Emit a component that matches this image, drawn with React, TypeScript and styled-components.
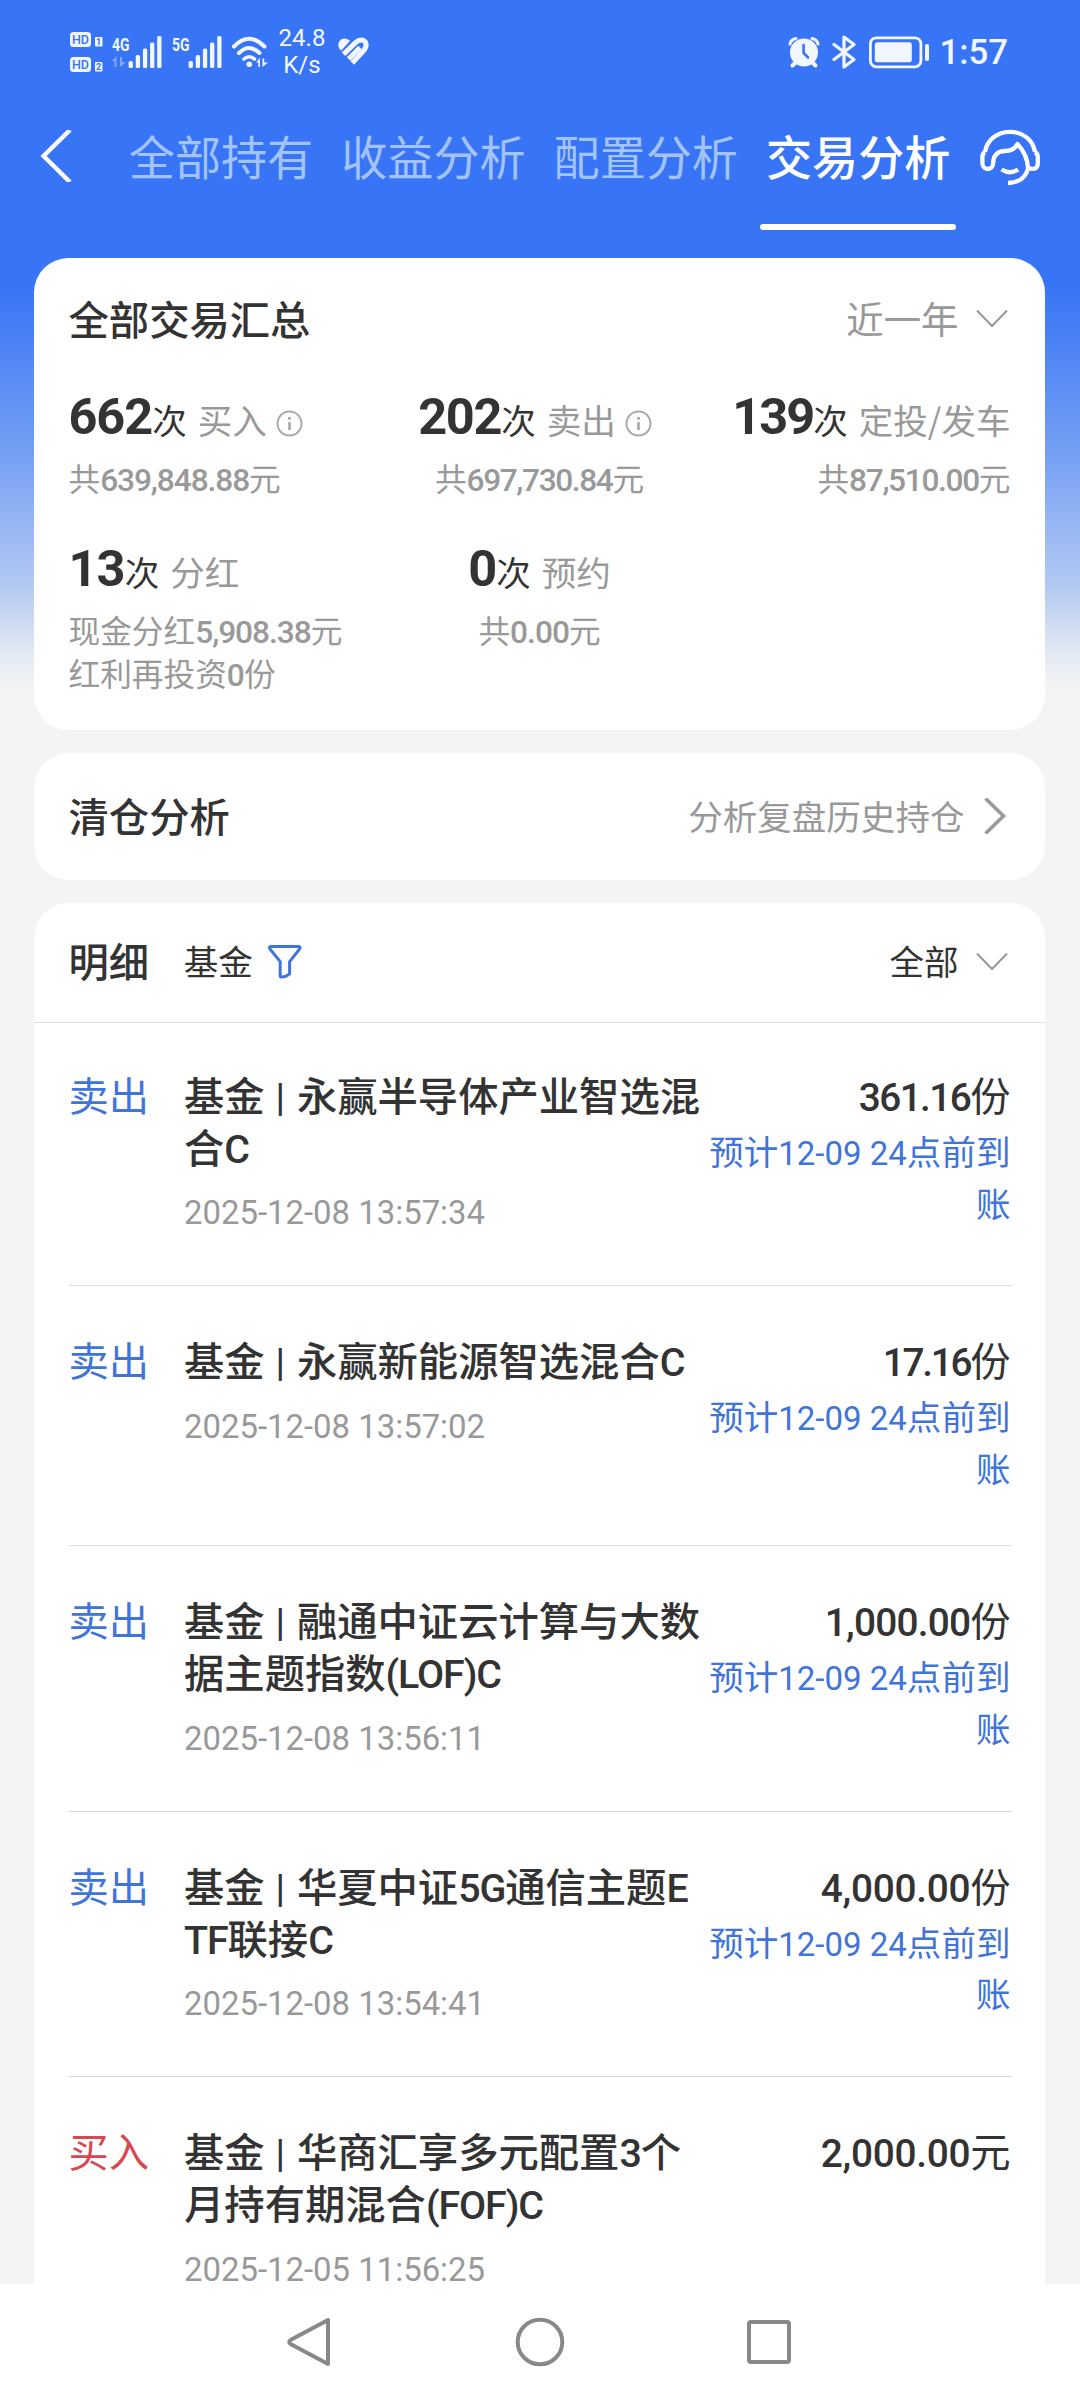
import React from 'react';
import styled, { createGlobalStyle } from 'styled-components';

const CJK = "'Noto Sans CJK SC', 'Noto Sans', sans-serif";
const DIGIT = "Roboto, 'Noto Sans CJK SC', sans-serif";
const BLUE = '#3875f6';
const LINK = '#3f74da';
const INK = '#333333';
const MUTED = '#999999';

const GlobalStyle = createGlobalStyle`
  * { box-sizing: border-box; }
  body { margin: 0; background: #f4f4f4; }
`;

const Screen = styled.div`
  width: 1080px;
  height: 2400px;
  overflow: hidden;
  display: flex;
  flex-direction: column;
  font-family: ${CJK};
  color: ${INK};
  background: linear-gradient(
      ${BLUE} 0,
      ${BLUE} 285px,
      #4c83f5 345px,
      #7ba3f4 465px,
      #b3c9f3 585px,
      #e4eaf3 655px,
      #f4f4f4 690px
    )
    #f4f4f4;
`;

const StatusBar = styled.div`
  height: 104px;
  padding: 0 72px 0 70px;
  display: flex;
  justify-content: space-between;
  align-items: center;
  color: #f2f6ff;
  font-family: ${DIGIT};
`;

const StatusGroup = styled.div`
  display: flex;
  align-items: center;
`;

const StatusIcon = styled.svg<{ $gap?: number }>`
  display: block;
  flex: none;
  overflow: visible;
  margin-left: ${(p) => p.$gap ?? 0}px;
`;

const NetSpeed = styled.div`
  width: 50px;
  margin: 0 8px 0 8px;
  font-size: 24px;
  line-height: 27px;
  text-align: center;
`;

const Clock = styled.div`
  margin-left: 9px;
  font-size: 34.8px;
  line-height: 40px;
  font-weight: 500;
`;

const TopBar = styled.div`
  height: 126px;
  display: flex;
  align-items: flex-start;
  padding-left: 40px;
`;

const BackIcon = styled.svg`
  display: block;
  margin: 26px 51px 0 0;
`;

const Tabs = styled.div`
  display: flex;
  align-items: stretch;
  height: 126px;
  gap: 16.4px;
`;

const Tab = styled.div<{ $active?: boolean }>`
  width: 196px;
  padding-top: 21px;
  display: flex;
  flex-direction: column;
  justify-content: space-between;
  text-align: center;
  white-space: nowrap;
  font-size: 46.08px;
  line-height: 60px;
  font-weight: ${(p) => (p.$active ? 500 : 400)};
  color: ${(p) => (p.$active ? '#fff' : '#a3c3fd')};
  &::after {
    content: '';
    height: 6px;
    border-radius: 3px;
    background: ${(p) => (p.$active ? '#fff' : 'transparent')};
  }
`;

const ServiceIcon = styled.svg`
  display: block;
  margin: 21px 0 0 21px;
`;

const Content = styled.main`
  flex: 1;
  min-height: 0;
  overflow: hidden;
  padding: 28px 35px 0 34px;
  display: flex;
  flex-direction: column;
  gap: 23px;
`;

const Card = styled.section`
  flex: none;
  background: #fff;
  border-radius: 34.56px;
`;

const SummaryCard = styled(Card)`
  height: 472px;
  padding: 29.5px 34.5px 0;
`;

const BetweenRow = styled.div`
  display: flex;
  justify-content: space-between;
  align-items: center;
`;

const Title = styled.h2`
  margin: 0;
  font-size: 40.32px;
  line-height: 60px;
  font-weight: 500;
`;

const Picker = styled.div<{ $size: number; $color: string }>`
  display: flex;
  align-items: center;
  font-size: ${(p) => p.$size}px;
  line-height: 60px;
  color: ${(p) => p.$color};
`;

const PickerIcon = styled.svg<{ $gap: number; $right: number }>`
  display: block;
  margin: 3px ${(p) => p.$right}px 0 ${(p) => p.$gap}px;
`;

const StatGrid = styled.div`
  display: grid;
  grid-template-columns: repeat(3, 1fr);
  row-gap: 42.3px;
  padding-top: 41.5px;
`;

const Stat = styled.div<{ $align: 'flex-start' | 'center' | 'flex-end' }>`
  display: flex;
  flex-direction: column;
  align-items: ${(p) => p.$align};
  white-space: nowrap;
`;

const StatHead = styled.div`
  display: flex;
  align-items: baseline;
  height: 60px;
  font-size: 34.56px;
  line-height: 60px;
  margin-bottom: 6.7px;
`;

const StatCount = styled.span<{ $track: number }>`
  font-family: ${DIGIT};
  font-weight: 700;
  font-size: 50.5px;
  line-height: 0;
  letter-spacing: ${(p) => p.$track}px;
`;

const StatName = styled.span`
  margin-left: 11px;
  color: ${MUTED};
`;

const InfoIcon = styled.svg`
  align-self: center;
  margin: 8px 9px 0 9px;
`;

const StatSub = styled.div`
  font-size: 31.68px;
  line-height: 43px;
  color: ${MUTED};
`;

const Digits = styled.span<{ $size: number; $track?: number; $weight?: number }>`
  font-family: ${DIGIT};
  font-size: ${(p) => p.$size}px;
  letter-spacing: ${(p) => p.$track ?? 0}px;
  font-weight: ${(p) => p.$weight ?? 400};
  line-height: 0;
  white-space: pre;
`;

const ReviewCard = styled(Card)`
  height: 127px;
  padding: 0 34.5px 4px;
  display: flex;
  align-items: center;
  justify-content: space-between;
`;

const DetailCard = styled(Card)`
  border-radius: 34.56px 34.56px 0 0;
  height: 1500px;
`;

const DetailHead = styled.div`
  height: 120px;
  padding: 0 34.5px 5px;
  border-bottom: 1px solid #dcdcdc;
  display: flex;
  align-items: center;
  justify-content: space-between;
`;

const FilterGroup = styled.div`
  display: flex;
  align-items: center;
`;

const FilterName = styled.span`
  margin: 0 14px 0 34.5px;
  font-size: 34.56px;
  line-height: 60px;
`;

const FilterIcon = styled.svg`
  display: block;
  margin-top: 3px;
`;

const TradeRow = styled.article<{ $first?: boolean }>`
  margin: 0 33.5px 0 34.5px;
  padding: ${(p) => (p.$first ? 45 : 47)}px 1px ${(p) => (p.$first ? 51.5 : 52)}px 0;
  border-bottom: 1px solid #dcdcdc;
  display: grid;
  grid-template-columns: 115.5px 519px 1fr;
`;

const Kind = styled.div<{ $buy?: boolean }>`
  font-size: 40.32px;
  line-height: 51.84px;
  color: ${(p) => (p.$buy ? '#d9484f' : LINK)};
`;

const TradeName = styled.div`
  font-size: 40.32px;
  line-height: 51.84px;
  font-weight: 500;
  white-space: nowrap;
`;

const TradeTime = styled.div`
  margin-top: 15.8px;
  height: 46px;
  font-family: ${DIGIT};
  font-size: 32.9px;
  line-height: 51.5px;
  color: ${MUTED};
`;

const Side = styled.div`
  text-align: right;
  white-space: nowrap;
`;

const Amount = styled.div`
  font-size: 40.32px;
  line-height: 51.84px;
  margin-bottom: 5.4px;
`;

const Arrival = styled.div`
  font-size: 34.56px;
  line-height: 51.5px;
  color: ${LINK};
`;

const NavBar = styled.nav`
  flex: none;
  height: 116px;
  background: #fff;
  display: flex;
  align-items: center;
  justify-content: center;
  gap: 179px;
`;

const NavIcon = styled.svg`
  display: block;
`;

function HdBadges() {
  return (
    <StatusIcon width="34" height="42" viewBox="0 0 34 42">
      {[1, 26].map((y, i) => (
        <g key={y}>
          <rect x="0" y={y} width="21" height="15" rx="3.5" fill="#f2f6ff" />
          <text x="10.5" y={y + 12.2} fontSize="13.5" fontWeight="500" fontFamily="Roboto, sans-serif" fill={BLUE} textAnchor="middle" textLength="17" lengthAdjust="spacingAndGlyphs">HD</text>
          <rect x="25" y={y + 5} width="7.5" height="9.5" rx="1" fill="#f2f6ff" />
          <text x="28.7" y={y + 12.9} fontSize="9" fontWeight="700" fontFamily="Roboto, sans-serif" fill={BLUE} textAnchor="middle">{i + 1}</text>
        </g>
      ))}
    </StatusIcon>
  );
}

function Signal({ label, traffic, gap }: { label: string; traffic?: boolean; gap: number }) {
  return (
    <StatusIcon $gap={gap} width="50" height="34" viewBox="0 0 50 34" fill="#f2f6ff">
      <text x="0" y="15.5" fontSize="19" fontWeight="700" fontFamily="Roboto, sans-serif" textLength="17.5" lengthAdjust="spacingAndGlyphs">{label}</text>
      {traffic && <path d="M0 26 L4.5 21 V32 H2.5 V26Z M8 22 H10 V27 H14 L8 32Z" opacity="0.4" />}
      {[7, 13, 19.5, 25.5, 32].map((h, i) => (
        <rect key={h} x={16.6 + i * 7.15} y={33 - h} width="4.3" height={h} rx="1.6" />
      ))}
    </StatusIcon>
  );
}

function Chevron() {
  return (
    <PickerIcon $gap={17} $right={3} width="32" height="20" viewBox="0 0 32 20" fill="none">
      <path d="M1 1.5 L16 17 L31 1.5" stroke="#999" strokeWidth="2" />
    </PickerIcon>
  );
}

function Info() {
  return (
    <InfoIcon width="27" height="27" viewBox="0 0 27 27" fill="none" stroke="#aaa">
      <circle cx="13.5" cy="13.5" r="12" strokeWidth="2" />
      <path d="M13.5 12 V20" strokeWidth="2.6" />
      <path d="M13.5 7 V9.6" strokeWidth="2.8" />
    </InfoIcon>
  );
}

type StatData = {
  count: string;
  track: number;
  name: string;
  info?: boolean;
  align: 'flex-start' | 'center' | 'flex-end';
  subs: [string, string, string, number][];
};

const stats: StatData[] = [
  { count: '662', track: -1.1, name: '买入', info: true, align: 'flex-start', subs: [['共', '639,848.88', '元', -1.1]] },
  { count: '202', track: -1.3, name: '卖出', info: true, align: 'center', subs: [['共', '697,730.84', '元', -1.4]] },
  { count: '139', track: -2, name: '定投/发车', align: 'flex-end', subs: [['共', '87,510.00', '元', -1.35]] },
  { count: '13', track: -0.9, name: '分红', align: 'flex-start', subs: [['现金分红', '5,908.38', '元', -1.05], ['红利再投资', '0', '份', -1]] },
  { count: '0', track: -1, name: '预约', align: 'center', subs: [['共', '0.00', '元', -1]] },
];

type Trade = {
  buy?: boolean;
  lines: string[];
  time: string;
  amount: string;
  unit: string;
  track: number;
  arrival?: boolean;
};

const trades: Trade[] = [
  { lines: ['永赢半导体产业智选混', '合C'], time: '2025-12-08 13:57:34', amount: '361.16', unit: '份', track: -1.6, arrival: true },
  { lines: ['永赢新能源智选混合C'], time: '2025-12-08 13:57:02', amount: '17.16', unit: '份', track: -2.3, arrival: true },
  { lines: ['融通中证云计算与大数', '据主题指数(LOF)C'], time: '2025-12-08 13:56:11', amount: '1,000.00', unit: '份', track: -0.8, arrival: true },
  { lines: ['华夏中证5G通信主题E', 'TF联接C'], time: '2025-12-08 13:54:41', amount: '4,000.00', unit: '份', track: -0.3, arrival: true },
  { buy: true, lines: ['华商汇享多元配置3个', '月持有期混合(FOF)C'], time: '2025-12-05 11:56:25', amount: '2,000.00', unit: '元', track: -0.3 },
];

function Mixed({ text }: { text: string }) {
  return (
    <>
      {text.split(/([A-Za-z0-9()]+)/).map((part, i) =>
        i % 2 ? (
          <Digits key={i} $size={39.4} $weight={500} $track={-1.1}>{part}</Digits>
        ) : (
          part
        ),
      )}
    </>
  );
}

export default function App() {
  return (
    <Screen>
      <GlobalStyle />
      <StatusBar>
        <StatusGroup>
          <HdBadges />
          <Signal label="4G" traffic gap={8} />
          <Signal label="5G" gap={10} />
          <StatusIcon $gap={9} width="38" height="34" viewBox="0 0 38 34" fill="none" stroke="#f2f6ff" strokeWidth="4" strokeLinecap="round">
            <path d="M3 11.5 Q18 -4 33.5 11.5" />
            <path d="M8 18 Q18 8 28.5 18" />
            <path d="M13 24 Q18 19.5 23.5 24" strokeWidth="3.6" />
            <circle cx="18.3" cy="29.3" r="2.8" fill="#f2f6ff" stroke="none" />
            <path d="M25 27.5 L29 23 V32 H27.3 V27.5Z M31.5 23.5 H33.2 V27.5 H37 L31.5 32Z" fill="#f2f6ff" stroke="none" />
          </StatusIcon>
          <NetSpeed>24.8 K/s</NetSpeed>
          <StatusIcon $gap={2} width="34" height="30" viewBox="0 0 34 30" fill="none" stroke="#f2f6ff" strokeWidth="5">
            <path d="M2.2 11.5 C-1 5 5 -0.5 10.5 2.2 L13 3.8 L4.2 13.8Z" fill="#f2f6ff" stroke="none" />
            <path d="M6.6 17.2 L18.5 5.6 C23 1.4 27.5 2.8 28.8 6 C29.8 9 28.6 11 27 13.2 L15.3 26" />
            <path d="M11.6 22 L23 10.6" />
          </StatusIcon>
        </StatusGroup>
        <StatusGroup>
          <StatusIcon width="32" height="32" viewBox="0 0 32 32" fill="none" stroke="#f2f6ff" strokeLinecap="round">
            <circle cx="16" cy="16.5" r="14" fill="#f2f6ff" stroke="none" />
            <path d="M2 8 Q3 3.5 8 2.6 M30 8 Q29 3.5 24 2.6" strokeWidth="3" />
            <path d="M7 27 L4.5 29.5 M25 27 L27.5 29.5" strokeWidth="4" />
            <path d="M15.6 9 V17 L20 21.5" stroke={BLUE} strokeWidth="2.6" />
          </StatusIcon>
          <StatusIcon $gap={12} width="25" height="34" viewBox="0 0 25 34" fill="none" stroke="#f2f6ff" strokeWidth="3.2" strokeLinecap="round" strokeLinejoin="round">
            <path d="M2 9.5 L22 24.5 L12 32 V2 L22 9.5 L2 24.5" />
          </StatusIcon>
          <StatusIcon $gap={12} width="61" height="33" viewBox="0 0 61 33">
            <rect x="1.4" y="1.8" width="50.5" height="29" rx="6" fill="none" stroke="#f2f6ff" strokeWidth="2.8" />
            <rect x="5.8" y="6.3" width="37" height="20" rx="2.5" fill="#f2f6ff" />
            <rect x="56" y="8" width="4" height="17" rx="1.8" fill="#f2f6ff" />
          </StatusIcon>
          <Clock>1:57</Clock>
        </StatusGroup>
      </StatusBar>

      <TopBar>
        <BackIcon width="32" height="52" viewBox="0 0 32 52" fill="none">
          <path d="M30 0 L3.6 26 L30 52" stroke="#fff" strokeWidth="4.4" />
        </BackIcon>
        <Tabs>
          <Tab>全部持有</Tab>
          <Tab>收益分析</Tab>
          <Tab>配置分析</Tab>
          <Tab $active>交易分析</Tab>
        </Tabs>
        <ServiceIcon width="66" height="64" viewBox="0 0 66 64" fill="none" stroke="#fff" strokeWidth="4.3" strokeLinejoin="round">
          <path d="M8 27 C10 15 20 6.8 33 6.8 S56 15 58 27" />
          <path d="M8 27 C6 28 5.4 29 5.4 32 V38 C5.4 46 16.2 46 16.2 38 C16.2 30 21 26 28 26 C34 26 38 24 40.5 19 C46 25 50.5 32 51 43 C59 45.5 60.8 42 60.8 38 V32 C60.8 29 60 28 58 27" />
          <path d="M51.5 41 C50 52 42 58 31 58" />
          <path d="M24.5 44.5 C30 48 36 48 41 44.5" />
        </ServiceIcon>
      </TopBar>

      <Content>
        <SummaryCard>
          <BetweenRow>
            <Title>全部交易汇总</Title>
            <Picker $size={37.44} $color={MUTED}>
              近一年
              <Chevron />
            </Picker>
          </BetweenRow>
          <StatGrid>
            {stats.map((s) => (
              <Stat key={s.name} $align={s.align}>
                <StatHead>
                  <StatCount $track={s.track}>{s.count}</StatCount>
                  <span>次</span>
                  <StatName>{s.name}</StatName>
                  {s.info && <Info />}
                </StatHead>
                {s.subs.map(([lead, num, unit, track]) => (
                  <StatSub key={lead}>
                    {lead}
                    <Digits $size={31.68} $weight={500} $track={track}>{num}</Digits>
                    {unit}
                  </StatSub>
                ))}
              </Stat>
            ))}
          </StatGrid>
        </SummaryCard>

        <ReviewCard>
          <Title>清仓分析</Title>
          <Picker $size={34.56} $color={MUTED}>
            分析复盘历史持仓
            <PickerIcon $gap={18} $right={4} width="24" height="36" viewBox="0 0 24 36" fill="none">
              <path d="M2.5 0.5 L20.5 18 L2.5 35.5" stroke="#999" strokeWidth="3.6" />
            </PickerIcon>
          </Picker>
        </ReviewCard>

        <DetailCard>
          <DetailHead>
            <FilterGroup>
              <Title>明细</Title>
              <FilterName>基金</FilterName>
              <FilterIcon width="36" height="36" viewBox="0 0 36 36" fill="none" stroke={LINK} strokeWidth="3" strokeLinejoin="round">
                <path d="M4 2.5 H31.5 Q34 2.8 32.6 5 L22.6 17.6 V29.8 Q18 33.5 14 33 Q13.2 33 13.2 32 V17.6 L3 5 Q1.6 2.8 4 2.5Z" />
              </FilterIcon>
            </FilterGroup>
            <Picker $size={34.56} $color={INK}>
              全部
              <Chevron />
            </Picker>
          </DetailHead>
          {trades.map((t, i) => (
            <TradeRow key={t.time} $first={i === 0}>
              <Kind $buy={t.buy}>{t.buy ? '买入' : '卖出'}</Kind>
              <div>
                {t.lines.map((line, n) => (
                  <TradeName key={line}>
                    {n === 0 && (
                      <>
                        基金
                        <Digits $size={38} $weight={500} $track={1.3}>{' | '}</Digits>
                      </>
                    )}
                    <Mixed text={line} />
                  </TradeName>
                ))}
                <TradeTime>{t.time}</TradeTime>
              </div>
              <Side>
                <Amount>
                  <Digits $size={38.8} $weight={500} $track={t.track}>{t.amount}</Digits>
                  {t.unit}
                </Amount>
                {t.arrival && (
                  <>
                    <Arrival>
                      预计
                      <Digits $size={33} $track={0}>12-09 24</Digits>
                      点前到
                    </Arrival>
                    <Arrival>账</Arrival>
                  </>
                )}
              </Side>
            </TradeRow>
          ))}
        </DetailCard>
      </Content>

      <NavBar>
        <NavIcon width="50" height="50" viewBox="0 0 50 50" fill="none" stroke="#888" strokeWidth="4" strokeLinejoin="round">
          <path d="M42 3 V47 L4.5 27 Q2 25 4.5 23Z" />
        </NavIcon>
        <NavIcon width="50" height="50" viewBox="0 0 50 50" fill="none" stroke="#888" strokeWidth="4">
          <circle cx="25" cy="25" r="22.3" />
        </NavIcon>
        <NavIcon width="50" height="50" viewBox="0 0 50 50" fill="none" stroke="#888" strokeWidth="4">
          <rect x="5" y="5" width="40" height="40" rx="2" />
        </NavIcon>
      </NavBar>
    </Screen>
  );
}
